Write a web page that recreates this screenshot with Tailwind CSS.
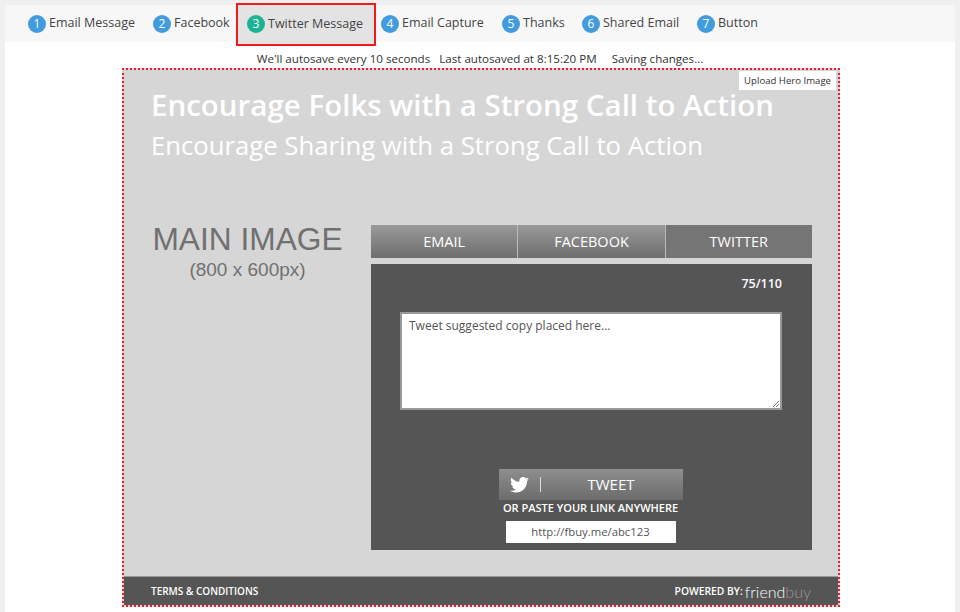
<!DOCTYPE html>
<html lang="en">
<head>
    <meta charset="UTF-8">
    <title>Twitter Message</title>
    <script src="https://cdn.jsdelivr.net/npm/@tailwindcss/browser@4"></script>
</head>
<body class="bg-[#f0f0f0] h-[612px] overflow-hidden font-['Open_Sans',sans-serif]">
    <div class="mx-[5px] mt-[5px] bg-white h-[607px] rounded-t-sm">
        <!-- steps -->
        <div class="h-[37px] bg-[#f7f7f7] flex items-center pl-[23px] text-[12.5px] text-[#444] whitespace-nowrap">
            <div class="flex items-center gap-[3px] w-[125px]"><span class="w-[18px] h-[18px] rounded-full bg-[#419bdc] text-white text-[12px] flex items-center justify-center">1</span>Email Message</div>
            <div class="flex items-center gap-[3px] w-[83px]"><span class="w-[18px] h-[18px] rounded-full bg-[#419bdc] text-white text-[12px] flex items-center justify-center">2</span>Facebook</div>
            <div class="flex items-center gap-[3px] w-[140px] h-[43px] pl-[9px] mt-[1px] bg-[#e3e3e3] border-2 border-[#f01c1c]"><span class="w-[18px] h-[18px] rounded-full bg-[#1cb394] text-white text-[12px] flex items-center justify-center">3</span>Twitter Message</div>
            <div class="flex items-center gap-[3px] w-[121px] ml-[5px]"><span class="w-[18px] h-[18px] rounded-full bg-[#419bdc] text-white text-[12px] flex items-center justify-center">4</span>Email Capture</div>
            <div class="flex items-center gap-[3px] w-[80px]"><span class="w-[18px] h-[18px] rounded-full bg-[#419bdc] text-white text-[12px] flex items-center justify-center">5</span>Thanks</div>
            <div class="flex items-center gap-[3px] w-[115px]"><span class="w-[18px] h-[18px] rounded-full bg-[#419bdc] text-white text-[12px] flex items-center justify-center">6</span>Shared Email</div>
            <div class="flex items-center gap-[3px]"><span class="w-[18px] h-[18px] rounded-full bg-[#419bdc] text-white text-[12px] flex items-center justify-center">7</span>Button</div>
        </div>
        <!-- autosave -->
        <div class="h-[26px] flex items-end justify-center text-[11.6px] leading-[19px] text-[#333] whitespace-nowrap">
            <span class="mr-[9px]">We'll autosave every 10 seconds</span>
            <span class="mr-[15px]">Last autosaved at 8:15:20 PM</span>
            <span>Saving changes...</span>
        </div>
        <!-- hero -->
        <div class="relative ml-[117px] w-[718px] h-[539px] border-2 border-dotted border-[#f01c2c] bg-[#d6d6d6] flex flex-col">
            <button class="absolute top-[1px] right-[2px] bg-white text-[9.6px] leading-[19px] text-[#333] px-[5px]">Upload Hero Image</button>
            <div class="pl-[27px] pt-[16px] text-white whitespace-nowrap">
                <h1 class="text-[29.5px] leading-[38px] font-semibold">Encourage Folks with a Strong Call to Action</h1>
                <h2 class="text-[25.7px] leading-[34px] mt-[5px]">Encourage Sharing with a Strong Call to Action</h2>
            </div>
            <div class="flex flex-1 mt-[62px]">
                <div class="w-[247px] -mt-[4px] text-center font-['Liberation_Sans',sans-serif] text-[#707070]">
                    <div class="text-[31.7px] leading-[36px]">MAIN IMAGE</div>
                    <div class="text-[19px] leading-[25px]">(800 x 600px)</div>
                </div>
                <div class="w-[441px]">
                    <div class="flex h-[33px] text-white text-[14.5px]">
                        <div class="flex-1 flex items-center justify-center bg-gradient-to-b from-[#9a9a9a] to-[#6e6e6e] border-r border-[#bbb]">EMAIL</div>
                        <div class="flex-1 flex items-center justify-center bg-gradient-to-b from-[#9a9a9a] to-[#6e6e6e] border-r border-[#bbb]">FACEBOOK</div>
                        <div class="flex-1 flex items-center justify-center bg-[#757575]">TWITTER</div>
                    </div>
                    <div class="mt-[6px] h-[286px] bg-[#555] flex flex-col items-center">
                        <div class="self-end pr-[30px] pt-[11px] text-white text-[12.5px] font-semibold leading-[18px]">75/110</div>
                        <div class="relative mt-[19px] mr-[1px] w-[382px] h-[98px] bg-white border-2 border-[#999] px-[7px] py-[3px] text-[12px] leading-[18px] text-[#555]">
                            Tweet suggested copy placed here...
                            <svg class="absolute right-[1px] bottom-[1px]" width="7" height="7" viewBox="0 0 7 7"><path d="M1 7L7 1M4 7L7 4" stroke="#777" fill="none"/></svg>
                        </div>
                        <div class="mt-[59px] mr-[2px] w-[184px] h-[31px] flex items-center bg-gradient-to-b from-[#8e8e8e] to-[#6c6c6c] text-white">
                            <svg class="ml-[11px]" width="19" height="16" viewBox="0 0 24 20"><path fill="#fff" d="M24 2.400c-.9.400-1.800.700-2.800.800 1-.600 1.800-1.600 2.200-2.700-1 .600-2 1-3.100 1.200C19.300.700 18 0 16.600 0c-2.700 0-4.900 2.200-4.900 4.900 0 .400 0 .800.100 1.100C7.700 5.800 4.100 3.900 1.700.900c-.400.700-.700 1.600-.700 2.500 0 1.700.900 3.200 2.200 4.100-.800 0-1.600-.200-2.200-.600v.100c0 2.400 1.700 4.400 3.900 4.800-.400.100-.800.200-1.300.200-.300 0-.600 0-.900-.100.600 2 2.400 3.400 4.600 3.400-1.700 1.300-3.800 2.100-6.100 2.100-.400 0-.800 0-1.200-.100 2.200 1.400 4.800 2.200 7.500 2.200 9.100 0 14-7.500 14-14v-.600c1-.700 1.800-1.500 2.500-2.500z"/></svg>
                            <span class="ml-[11px] w-px h-[15px] bg-[#ddd]"></span>
                            <span class="ml-[47px] text-[15px]">TWEET</span>
                        </div>
                        <div class="mr-[2px] text-white text-[11px] leading-[16px] font-semibold">OR PASTE YOUR LINK ANYWHERE</div>
                        <div class="mt-[5px] mr-[2px] w-[170px] h-[22px] bg-white flex items-center justify-center text-[11.3px] text-[#555]">http://fbuy.me/abc123</div>
                    </div>
                </div>
            </div>
            <div class="h-[29px] bg-[#555] border-t border-[#999] flex items-center justify-between px-[27px] pt-[1px] text-white text-[10px] font-semibold">
                <span>TERMS &amp; CONDITIONS</span>
                <span class="flex items-center gap-[2px] text-[10.3px]">POWERED BY: <span class="font-['Lato',sans-serif] font-light text-[16px] leading-none">friend<span class="text-[#999]">buy</span></span></span>
            </div>
        </div>
    </div>
</body>
</html>
